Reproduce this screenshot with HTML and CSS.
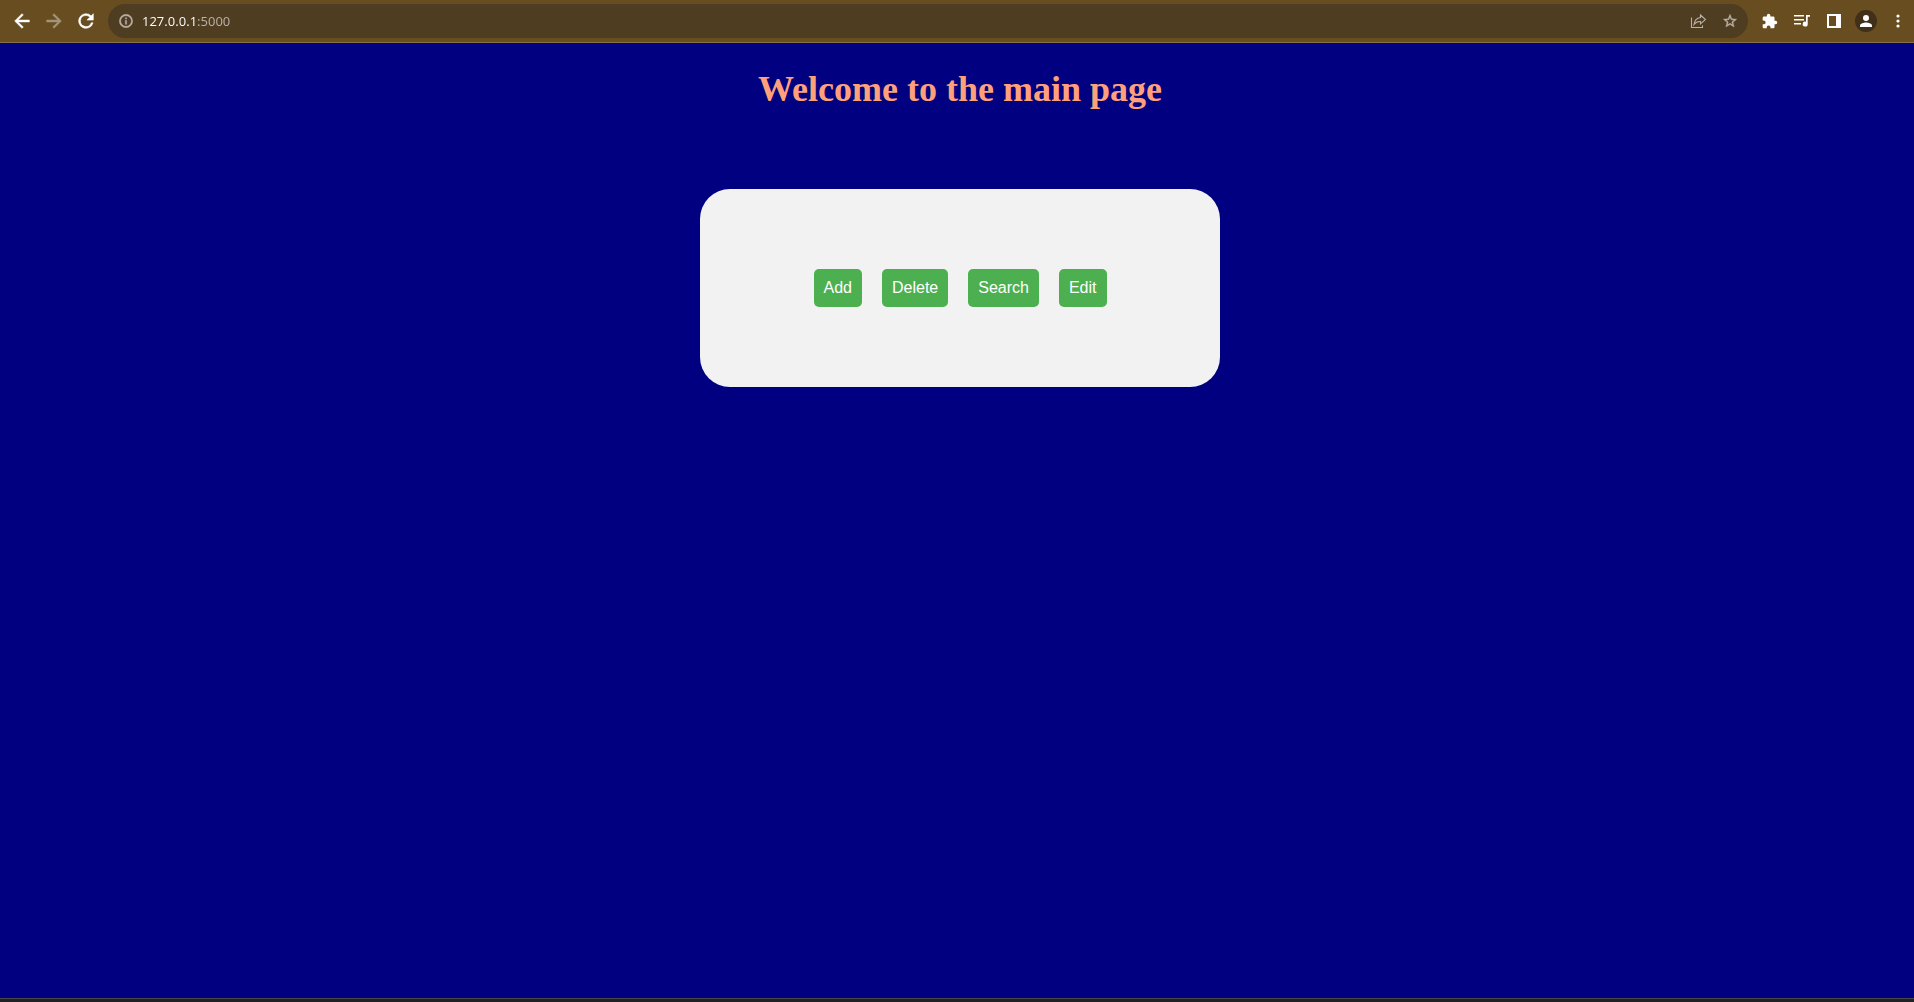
FILE: index.html
```html
<!DOCTYPE html>
<html lang="en">
<head>
<meta charset="utf-8">
<title>Main page</title>
<link rel="stylesheet" href="styles.css">
</head>
<body>
<header class="toolbar">
  <nav class="tools" aria-label="Navigation">
    <button class="tool" type="button" aria-label="Back"><svg class="bold" width="22" height="22" viewBox="0 0 24 24"><path d="M20 11H7.8l5.6-5.6L12 4l-8 8 8 8 1.4-1.4L7.8 13H20z"/></svg></button>
    <button class="tool faded" type="button" aria-label="Forward"><svg class="bold" width="22" height="22" viewBox="0 0 24 24"><path d="M12 4l-1.4 1.4 5.6 5.6H4v2h12.2l-5.6 5.6L12 20l8-8z"/></svg></button>
    <button class="tool" type="button" aria-label="Reload"><svg class="bold" width="22" height="22" viewBox="0 0 24 24"><path d="M17.65 6.35A8 8 0 1 0 19.73 14h-2.08A6 6 0 1 1 12 6c1.66 0 3.14.69 4.22 1.78L13 11h7V4z"/></svg></button>
  </nav>
  <div class="omnibox">
    <button class="tool muted" type="button" aria-label="Site information"><svg class="bold" width="16" height="16" viewBox="0 0 24 24"><path d="M11 7h2v2h-2zm0 4h2v6h-2zm1-9a10 10 0 1 0 0 20 10 10 0 0 0 0-20zm0 18a8 8 0 1 1 0-16 8 8 0 0 1 0 16z"/></svg></button>
    <input class="address" type="text" value="127.0.0.1:5000" aria-label="Address" spellcheck="false">
    <button class="tool muted" type="button" aria-label="Share"><svg width="16" height="16" viewBox="0 0 16 16" fill="none" stroke="currentColor" stroke-width="1.1"><path d="M1.500 4.500v10h11v-2M10.500 2l5 4.500-5 4.300V8.500C7.500 8.300 5.500 9.500 4 11.500 4.500 7.500 6.500 5 10.500 4.500z"/></svg></button>
    <button class="tool muted" type="button" aria-label="Bookmark"><svg class="bold" width="16" height="16" viewBox="0 0 24 24"><path d="M22 9.240l-7.190-.62L12 2 9.190 8.630 2 9.240l5.460 4.730L5.820 21 12 17.270 18.180 21l-1.630-7.030zM12 15.400l-3.760 2.270 1-4.280-3.320-2.880 4.380-.38L12 6.100l1.710 4.040 4.380.38-3.320 2.880 1 4.280z"/></svg></button>
  </div>
  <div class="tools">
    <button class="tool" type="button" aria-label="Extensions"><svg width="16" height="16" viewBox="1 0 23 23"><path d="M20.500 11H19V7a2 2 0 0 0-2-2h-4V3.500a2.500 2.500 0 0 0-5 0V5H4a2 2 0 0 0-2 2v3.800h1.500a2.700 2.700 0 0 1 0 5.400H2V20c0 1.100.9 2 2 2h3.800v-1.500a2.700 2.700 0 0 1 5.400 0V22H17a2 2 0 0 0 2-2v-4h1.500a2.500 2.500 0 0 0 0-5z"/></svg></button>
    <button class="tool" type="button" aria-label="Media"><svg width="16" height="16" viewBox="0 0 16 16"><path d="M0 2h10v1.500H0zm0 4h10v1.500H0zm0 4h7v1.500H0zM12 2h4v1.700h-2.300V11A2.500 2.500 0 1 1 12 8.700z"/></svg></button>
    <button class="tool" type="button" aria-label="Side panel"><svg width="14" height="14" viewBox="0 0 14 14"><path fill-rule="evenodd" d="M0 0h14v14H0zm2 2v10h7V2z"/></svg></button>
    <button class="tool" type="button" aria-label="Profile"><svg width="22" height="22" viewBox="0 0 22 22"><circle class="avatar" cx="11" cy="11" r="11"/><circle cx="11" cy="8" r="3"/><path d="M5 17v-1.500c0-2 4-3 6-3s6 1 6 3V17z"/></svg></button>
    <button class="tool" type="button" aria-label="Menu"><svg width="4" height="14" viewBox="0 0 4 14"><circle cx="2" cy="2" r="1.600"/><circle cx="2" cy="7" r="1.600"/><circle cx="2" cy="12" r="1.600"/></svg></button>
  </div>
</header>
<main class="page">
  <h1 class="title">Welcome to the main page</h1>
  <section class="card">
    <a class="action" href="#add">Add</a>
    <a class="action" href="#delete">Delete</a>
    <a class="action" href="#search">Search</a>
    <a class="action" href="#edit">Edit</a>
  </section>
</main>
<footer class="taskbar"></footer>
</body>
</html>
```
FILE: styles.css
```css
* {
  box-sizing: border-box;
}

body {
  margin: 0;
  min-height: 100vh;
  display: flex;
  flex-direction: column;
  background: #000080;
}

.toolbar {
  display: flex;
  align-items: center;
  gap: 6px;
  height: 43px;
  padding-left: 6px;
  background: #684d21;
  border-bottom: 1px solid #88724e;
}

.tools {
  display: flex;
}

.tool {
  display: flex;
  align-items: center;
  justify-content: center;
  flex: none;
  width: 32px;
  height: 32px;
  padding: 0;
  border: 0;
  background: none;
  color: #fff;
}

.tool svg {
  fill: currentColor;
}

.tool svg[fill="none"] {
  fill: none;
}

.tool .bold {
  stroke: currentColor;
  stroke-width: 0.6;
}

.tool .avatar {
  fill: #402f19;
}

.faded {
  color: #a4947a;
}

.muted {
  color: #b9b1a7;
}

.omnibox {
  display: flex;
  align-items: center;
  flex: 1;
  height: 34px;
  padding: 0 2px;
  border-radius: 17px;
  background: #4f3d22;
}

/* The host is white, the port after it is dimmed. */
.address {
  flex: 1;
  min-width: 0;
  height: 20px;
  padding: 0;
  border: 0;
  outline: 0;
  font: 13px/20px "Noto Sans", sans-serif;
  color: #fff;
  background: linear-gradient(90deg, #fff 55px, #b9b1a7 55px);
  -webkit-background-clip: text;
  background-clip: text;
  -webkit-text-fill-color: transparent;
}

.page {
  flex: 1;
  display: flex;
  flex-direction: column;
  align-items: center;
  padding: 24px 0 24px 6px;
}

.title {
  margin: 0 0 78px;
  font: bold 36px/44px "Liberation Serif", "Times New Roman", serif;
  color: #ffa07a;
}

.card {
  display: flex;
  justify-content: center;
  gap: 20px;
  width: 520px;
  max-width: 100%;
  padding: 80px 20px;
  border-radius: 30px;
  background: #f2f2f2;
}

.action {
  padding: 10px;
  border-radius: 5px;
  font: 16px/18px "Liberation Sans", Arial, sans-serif;
  color: #fff;
  text-decoration: none;
  background: #4caf50;
}

.taskbar {
  height: 4px;
  border-top: 1px solid #484848;
  background: #202124;
}
```
